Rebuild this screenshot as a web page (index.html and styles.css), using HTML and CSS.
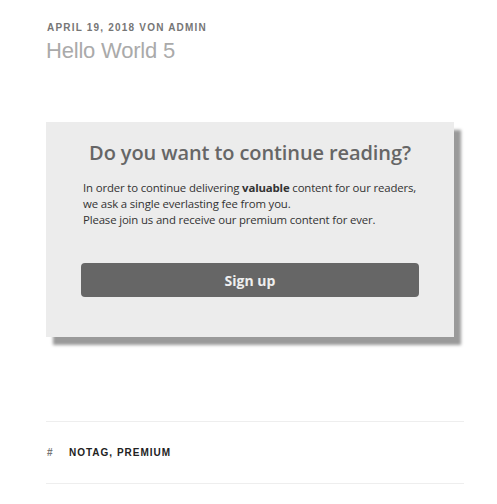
FILE: index.html
```html
<!DOCTYPE html>
<html>
<head>
<meta charset="utf-8">
<link rel="stylesheet" href="styles.css">
</head>
<body>
<article class="post">
  <header class="entry-header">
    <div class="entry-meta">April 19, 2018 von Admin</div>
    <h2 class="entry-title">Hello World 5</h2>
  </header>
  <div class="paywall">
    <h3 class="paywall-title">Do you want to continue reading?</h3>
    <p class="paywall-text">In order to continue delivering <strong>valuable</strong> content for our readers,<br>we ask a single everlasting fee from you.<br>Please join us and receive our premium content for ever.</p>
    <a class="paywall-btn">Sign up</a>
  </div>
  <footer class="entry-footer">
    <span class="hash">#</span><span class="tags">notag, premium</span>
  </footer>
</article>
</body>
</html>
```
FILE: styles.css
```css
html, body { margin: 0; padding: 0; background: #fff; }
body { font-family: "Liberation Sans", Arial, sans-serif; }
.post { width: 418px; margin-left: 46px; padding-top: 22px; }
.entry-meta {
  font-size: 10px; font-weight: 700; letter-spacing: 1.2px;
  text-transform: uppercase; color: #767676; line-height: 12px;
  padding-left: 1px;
}
.entry-title {
  margin: 4px 0 0 0; font-size: 22px; font-weight: 400; color: #aaa;
  line-height: 26px; letter-spacing: -0.2px;
}
.paywall {
  margin-top: 58px; width: 408px; height: 215px; box-sizing: border-box;
  background: #ececec; box-shadow: 7px 8px 3px #9a9a9a;
  padding: 17px 35px 0 35px;
  font-family: "Open Sans", sans-serif;
}
.paywall-title {
  margin: 0; text-align: center; font-size: 20px; font-weight: 600; color: #666;
  line-height: 28px; letter-spacing: -0.1px;
}
.paywall-text {
  margin: 13px 0 0 2px; font-size: 11.4px; line-height: 16px; color: #333;
  letter-spacing: -0.15px;
}
.paywall-text strong { font-weight: 700; }
.paywall-btn {
  display: flex; align-items: center; justify-content: center;
  margin-top: 35px; height: 34px; border-radius: 4px; background: #666;
  color: #eee; font-weight: 700; font-size: 14px;
}
.entry-footer {
  margin-top: 84px; border-top: 1px solid #eee; border-bottom: 1px solid #eee;
  height: 61px; display: flex; align-items: center;
  font-size: 10px; font-weight: 700; letter-spacing: 1px; text-transform: uppercase;
}
.hash { color: #767676; width: 22px; padding-left: 1px; font-weight: 700; }
.tags { color: #222; }
```
